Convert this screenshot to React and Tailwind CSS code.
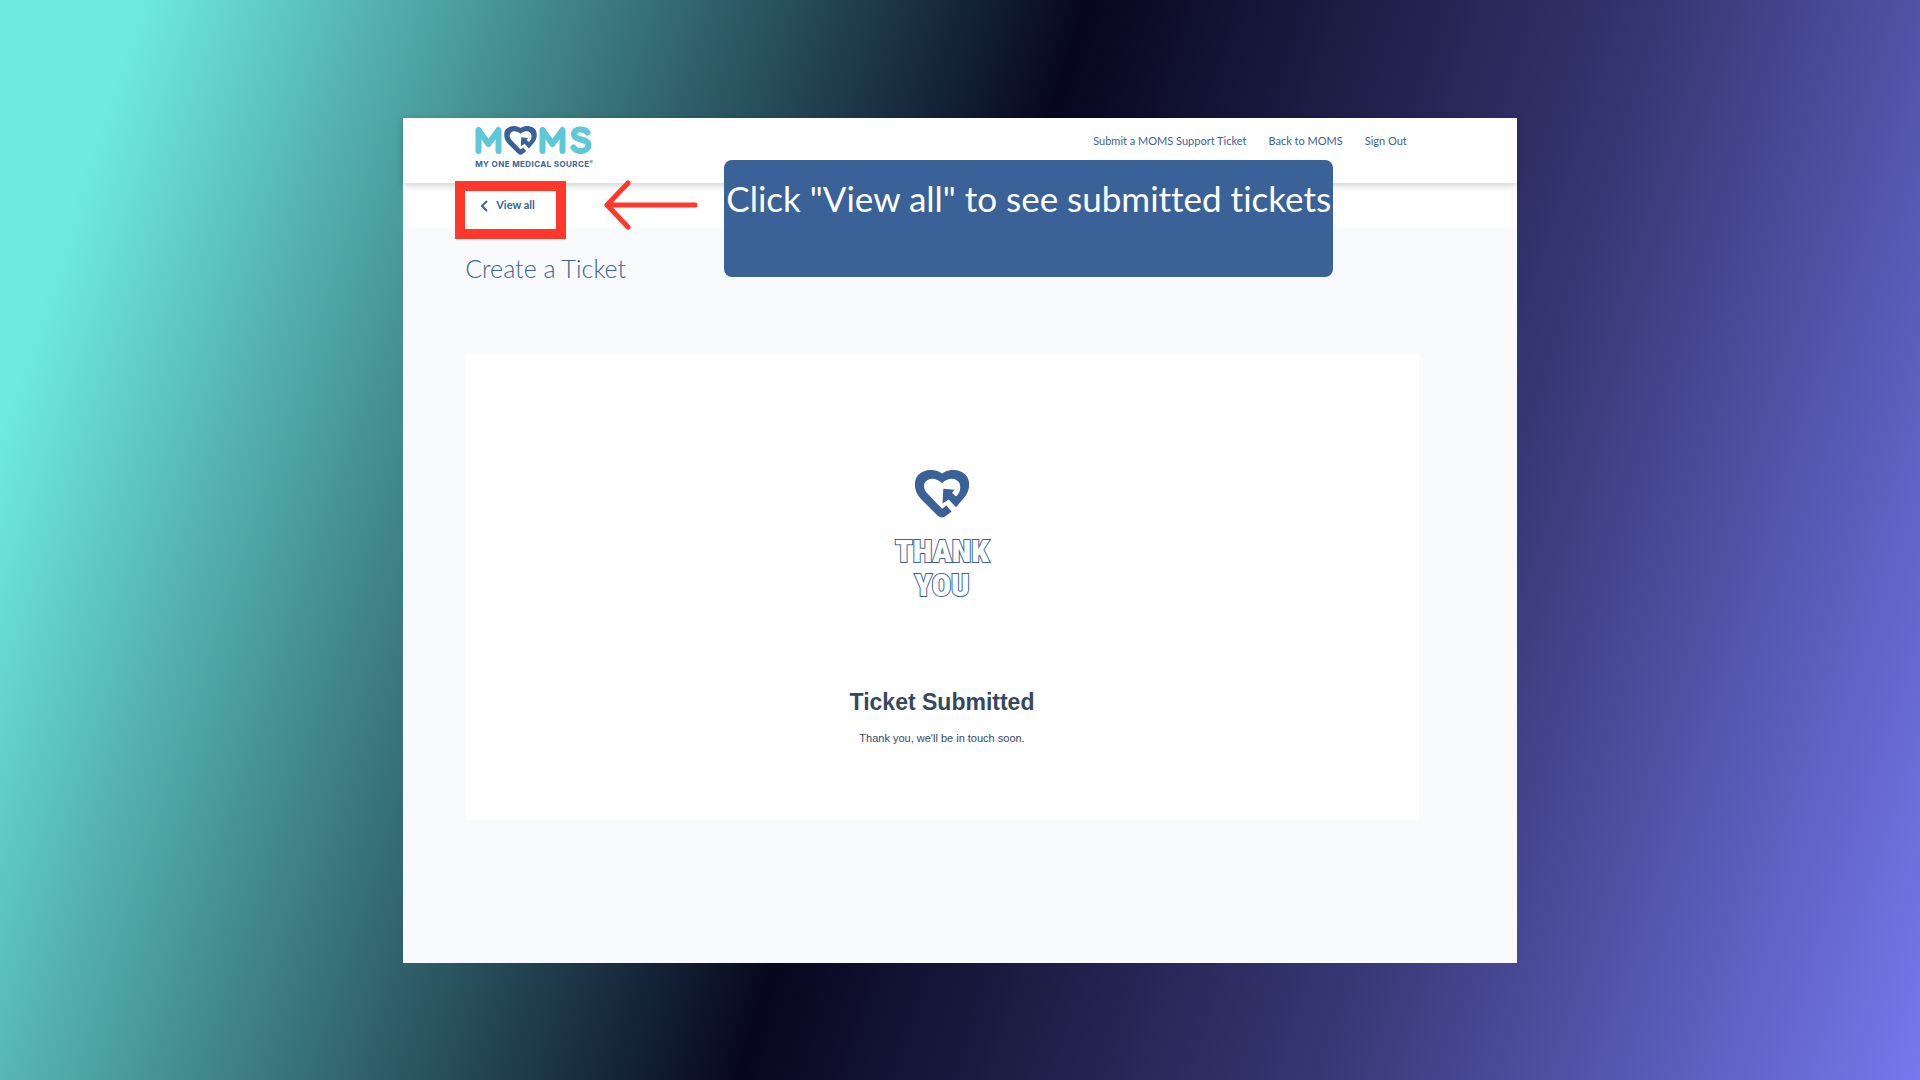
import clsx from 'clsx';

const navLinks = ['Submit a MOMS Support Ticket', 'Back to MOMS', 'Sign Out'];

// Heart with the arrow that turns back into it
const HeartMark = ({ className }) => (
  <svg viewBox="0 0 54 48" className={className} aria-hidden="true">
    <path
      d="M36.500 41.500 L31.500 45.600 Q27 49.500 22.500 45.600 L5.500 28.500 C-2.500 19.500 -1.500 8 5 3.500 C12 -1.500 21 -1 27 3.500 C33 -1 42 -1.500 49 3.500 C55.500 8 56.500 19.500 48.500 28.500 L41 37.200 L33.700 29.500 L27.500 33.500 L28.300 18.800 L39.500 19.800 L37 23 L41 26.500 C46 22.500 46.500 14.500 43 11.300 C38.500 7 32 8.500 27 13 C22 8.500 15.500 7 11 11.300 C8 14.500 8.500 19.500 12 23 L27 38.800 L31.500 35.500 Z"
      fill="currentColor"
    />
  </svg>
);

const Logo = () => (
  <a href="#home" className="flex w-fit flex-col text-[#3a6298]" aria-label="MOMS">
    <svg viewBox="0 0 118 30" className="h-[30px] w-[118px]" aria-hidden="true">
      <g fill="none" stroke="#5ec8d8" strokeWidth="6" strokeLinecap="round" strokeLinejoin="round">
        <path d="M3.500 25 V4 L13.500 18 L23.500 4 V25" />
        <path d="M67.500 25 V4 L77.500 18 L87.500 4 V25" />
        <path d="M112.500 6.500 C109 2 98.500 2.500 99 8.500 C99.500 15 113.500 12 113.500 19 C113.500 26 102 27 98.500 21.500" />
      </g>
      <svg x="29" y="0" width="33" height="29" viewBox="0 0 54 48">
        <HeartMark />
      </svg>
    </svg>
    <span className="mt-[3px] whitespace-nowrap font-[Inter,sans-serif] text-[8px] leading-[10px] font-bold tracking-wider">
      MY ONE MEDICAL SOURCE<sup className="text-[5px]">®</sup>
    </span>
  </a>
);

const Header = () => (
  <header className="relative flex h-[65px] items-start justify-between bg-white pt-2 pr-[110px] pl-[72px] shadow-[0_2px_8px_rgba(0,0,0,0.2)]">
    <Logo />
    <nav className="flex gap-[22px] pt-[7px] text-[11px] leading-4 text-[#3a6298]">
      {navLinks.map((link) => (
        <a key={link} href="#nav" className="whitespace-nowrap">
          {link}
        </a>
      ))}
    </nav>
  </header>
);

const Callout = () => (
  <div className="absolute top-[42px] left-[201px] flex items-start">
    <svg viewBox="0 0 94 50" className="mt-5 h-[50px] w-[94px]" aria-hidden="true">
      <path
        d="M91 25 H3 M24 3 L3 25 L24 47"
        fill="none"
        stroke="#ff382b"
        strokeWidth="5"
        strokeLinecap="round"
        strokeLinejoin="round"
      />
    </svg>
    <p className="ml-[26px] flex h-[117px] w-[609px] justify-center rounded-lg bg-[#3a6298] pt-4 text-[35px] leading-[44px] whitespace-nowrap text-white [font-variant-ligatures:none]">
      Click "View all" to see submitted tickets
    </p>
  </div>
);

const ThankYou = () => (
  <div className="flex flex-col items-center text-[#3a6298]">
    <HeartMark className="h-12 w-[54px]" />
    <p className="mt-4 text-center font-['Roboto_Condensed',Roboto,sans-serif] text-[32px] leading-[34px] font-black text-white [-webkit-text-stroke:2px_#3a6298] [paint-order:stroke]">
      THANK
      <br />
      YOU
    </p>
  </div>
);

export default function App() {
  return (
    <div
      className={clsx(
        'flex min-h-screen items-center justify-center',
        'bg-[linear-gradient(108deg,#6eebe0_6%,#07071f_48%,#363672_73%,#7678ed_100%)]',
        'font-[Lato,sans-serif]'
      )}
    >
      <main className="relative w-[58%] bg-[#f8fafc] pb-[143px]">
        <Header />
        <div className="flex h-[45px] items-start bg-white pl-[52px]">
          <a
            href="#tickets"
            className="z-10 -mt-0.5 flex h-[58px] w-[111px] items-center gap-2 border-[10px] border-[#ff382b] bg-white pb-2 pl-[15px] text-[11px] font-bold text-[#3a6298]"
          >
            <svg viewBox="0 0 8 12" className="h-3 w-2" aria-hidden="true">
              <path d="M7 1 L2 6 L7 11" fill="none" stroke="currentColor" strokeWidth="2" />
            </svg>
            View all
          </a>
        </div>
        <div className="pr-[98px] pl-[62px]">
          <h1 className="pt-6 text-[25px] leading-8 font-light text-[#3a6298]">Create a Ticket</h1>
          <section className="mt-[69px] flex flex-col items-center bg-white pt-[117px] pb-[74px] font-['Liberation_Sans',sans-serif] text-[#34495e]">
            <ThankYou />
            <h2 className="mt-[84px] text-[23px] leading-8 font-bold">Ticket Submitted</h2>
            <p className="mt-3 text-[11px] leading-4">Thank you, we'll be in touch soon.</p>
          </section>
        </div>
        <Callout />
      </main>
    </div>
  );
}
